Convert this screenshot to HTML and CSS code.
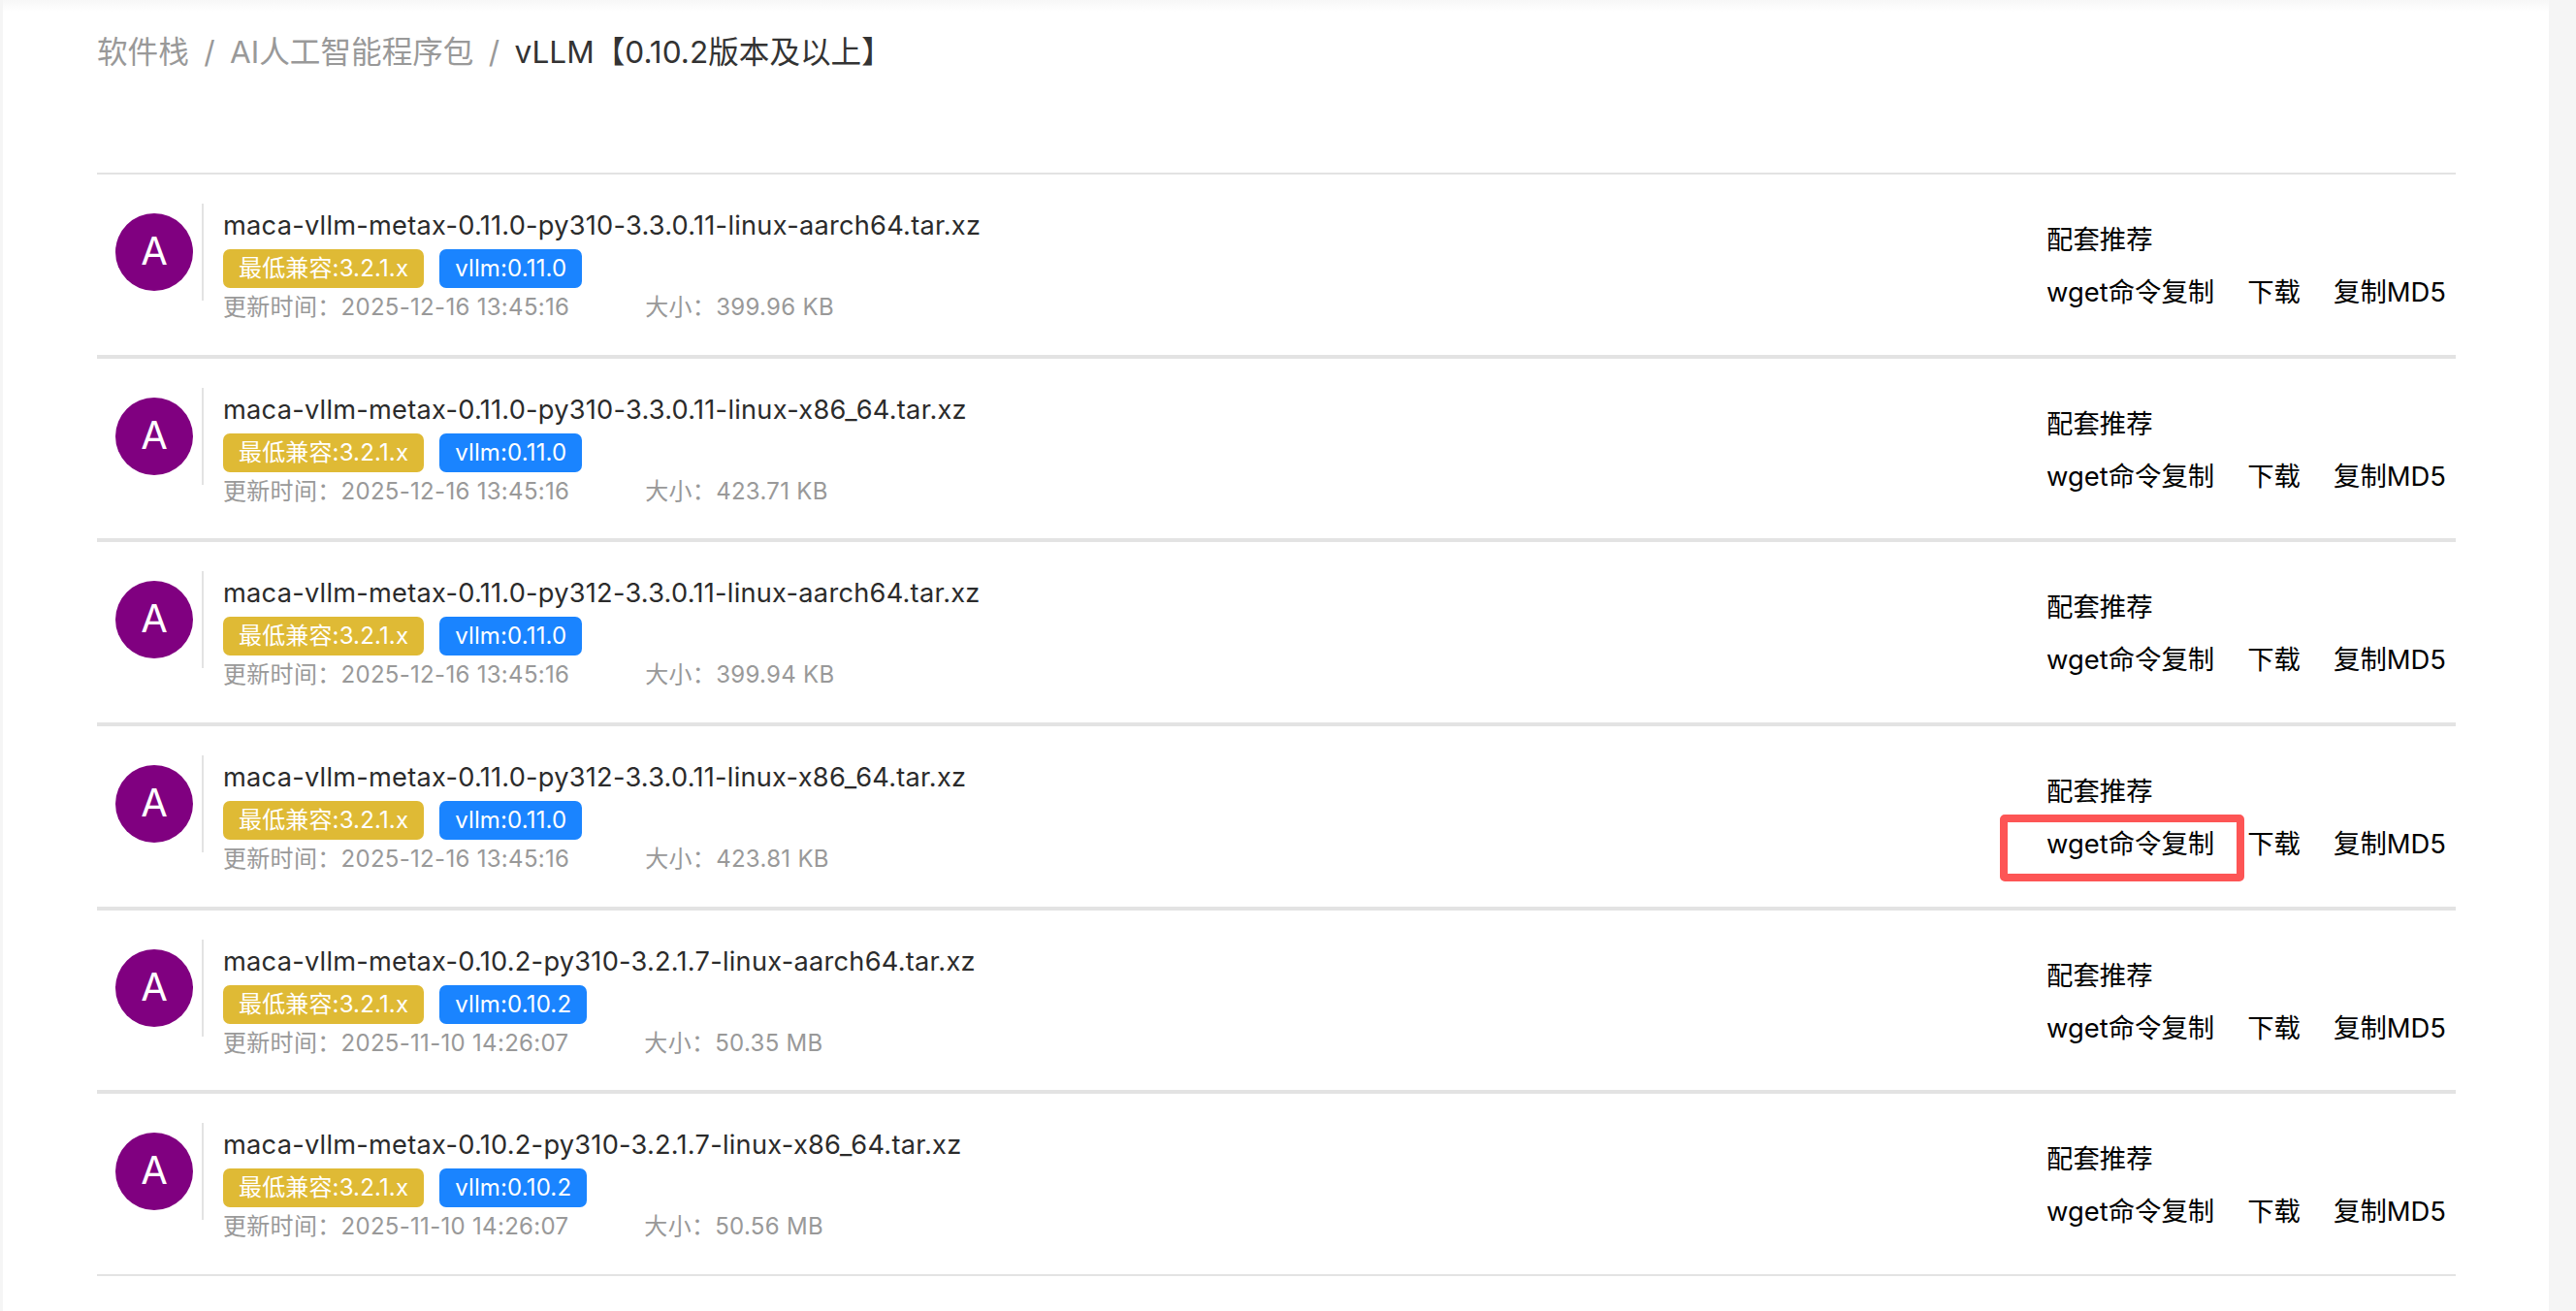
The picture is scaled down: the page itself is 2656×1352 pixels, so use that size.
FILE: index.html
```html
<!DOCTYPE html>
<html lang="zh-CN">
<head>
<meta charset="utf-8">
<title>vLLM 软件包</title>
<link rel="stylesheet" href="styles.css">
</head>
<body>
<main class="page">
  <nav class="crumbs">
    <span>软件栈</span><span class="sep">/</span><span>AI人工智能程序包</span><span class="sep">/</span><span class="current">vLLM【0.10.2版本及以上】</span>
  </nav>
  <ul class="list">
    <li class="row">
      <div class="avatar">A</div>
      <div class="info">
        <div class="name">maca-vllm-metax-0.11.0-py310-3.3.0.11-linux-aarch64.tar.xz</div>
        <div class="tags"><span class="tag gold">最低兼容:3.2.1.x</span><span class="tag blue">vllm:0.11.0</span></div>
        <div class="meta"><span>更新时间：2025-12-16 13:45:16</span><span class="size">大小：399.96 KB</span></div>
      </div>
      <div class="actions">
        <div class="act-line"><span>配套推荐</span></div>
        <div class="act-line"><span>wget命令复制</span><span>下载</span><span>复制MD5</span></div>
      </div>
    </li>
    <li class="row">
      <div class="avatar">A</div>
      <div class="info">
        <div class="name">maca-vllm-metax-0.11.0-py310-3.3.0.11-linux-x86_64.tar.xz</div>
        <div class="tags"><span class="tag gold">最低兼容:3.2.1.x</span><span class="tag blue">vllm:0.11.0</span></div>
        <div class="meta"><span>更新时间：2025-12-16 13:45:16</span><span class="size">大小：423.71 KB</span></div>
      </div>
      <div class="actions">
        <div class="act-line"><span>配套推荐</span></div>
        <div class="act-line"><span>wget命令复制</span><span>下载</span><span>复制MD5</span></div>
      </div>
    </li>
    <li class="row">
      <div class="avatar">A</div>
      <div class="info">
        <div class="name">maca-vllm-metax-0.11.0-py312-3.3.0.11-linux-aarch64.tar.xz</div>
        <div class="tags"><span class="tag gold">最低兼容:3.2.1.x</span><span class="tag blue">vllm:0.11.0</span></div>
        <div class="meta"><span>更新时间：2025-12-16 13:45:16</span><span class="size">大小：399.94 KB</span></div>
      </div>
      <div class="actions">
        <div class="act-line"><span>配套推荐</span></div>
        <div class="act-line"><span>wget命令复制</span><span>下载</span><span>复制MD5</span></div>
      </div>
    </li>
    <li class="row">
      <div class="avatar">A</div>
      <div class="info">
        <div class="name">maca-vllm-metax-0.11.0-py312-3.3.0.11-linux-x86_64.tar.xz</div>
        <div class="tags"><span class="tag gold">最低兼容:3.2.1.x</span><span class="tag blue">vllm:0.11.0</span></div>
        <div class="meta"><span>更新时间：2025-12-16 13:45:16</span><span class="size">大小：423.81 KB</span></div>
      </div>
      <div class="actions">
        <div class="act-line"><span>配套推荐</span></div>
        <div class="act-line"><span class="marked">wget命令复制</span><span>下载</span><span>复制MD5</span></div>
      </div>
    </li>
    <li class="row">
      <div class="avatar">A</div>
      <div class="info">
        <div class="name">maca-vllm-metax-0.10.2-py310-3.2.1.7-linux-aarch64.tar.xz</div>
        <div class="tags"><span class="tag gold">最低兼容:3.2.1.x</span><span class="tag blue">vllm:0.10.2</span></div>
        <div class="meta"><span>更新时间：2025-11-10 14:26:07</span><span class="size">大小：50.35 MB</span></div>
      </div>
      <div class="actions">
        <div class="act-line"><span>配套推荐</span></div>
        <div class="act-line"><span>wget命令复制</span><span>下载</span><span>复制MD5</span></div>
      </div>
    </li>
    <li class="row">
      <div class="avatar">A</div>
      <div class="info">
        <div class="name">maca-vllm-metax-0.10.2-py310-3.2.1.7-linux-x86_64.tar.xz</div>
        <div class="tags"><span class="tag gold">最低兼容:3.2.1.x</span><span class="tag blue">vllm:0.10.2</span></div>
        <div class="meta"><span>更新时间：2025-11-10 14:26:07</span><span class="size">大小：50.56 MB</span></div>
      </div>
      <div class="actions">
        <div class="act-line"><span>配套推荐</span></div>
        <div class="act-line"><span>wget命令复制</span><span>下载</span><span>复制MD5</span></div>
      </div>
    </li>
  </ul>
</main>
</body>
</html>
```
FILE: styles.css
```css
* { box-sizing: border-box; }
html, body { margin: 0; height: 100%; }
body {
  background: #f5f5f5;
  font-family: Inter, "Noto Sans CJK SC", sans-serif;
  overflow: hidden;
}
.page {
  margin: 0 28px 0 3px;
  height: 1352px;
  padding: 0 96px 0 97px;
  background: linear-gradient(#f7f7f7 0, #ffffff 12px);
}
.crumbs {
  display: flex;
  align-items: center;
  height: 178px;
  padding-bottom: 71px;
  font-size: 31.6px;
  line-height: 34px;
  color: #999;
}
.sep { margin: 0 15.4px; }
.current { color: #333; }
.list { list-style: none; margin: 0; padding: 0; }
.row {
  display: flex;
  align-items: flex-start;
  height: 189.67px;
  padding: 30px 0 0 19px;
  border-top: 2px solid #e3e3e3;
  border-bottom: 2px solid #e3e3e3;
}
.avatar {
  flex: none;
  width: 80px;
  height: 80px;
  margin: 10px 9px 0 0;
  border-radius: 50%;
  background: #800080;
  color: #fff;
  font-size: 40px;
  line-height: 78px;
  text-align: center;
}
.info {
  flex: 1;
  height: 100px;
  padding-left: 20px;
  border-left: 2px solid #e3e3e3;
}
.name {
  height: 47px;
  font-size: 27.2px;
  letter-spacing: 0.25px;
  line-height: 46px;
  color: #2b2b2b;
  white-space: nowrap;
}
.tags { display: flex; gap: 16px; }
.tag {
  height: 40px;
  padding: 0 16px;
  border-radius: 7px;
  color: #fff;
  font-size: 24px;
  letter-spacing: 0.15px;
  line-height: 40px;
}
.gold { background: #dfba35; }
.blue { background: #1a84ff; }
.meta {
  display: flex;
  font-size: 24px;
  letter-spacing: 0.3px;
  line-height: 39px;
  color: #999;
  white-space: nowrap;
}
.size { margin-left: 78px; }
.actions {
  flex: none;
  width: 422px;
  font-size: 27.4px;
  color: #000;
  padding-top: 15px;
}
.act-line { display: flex; gap: 34px; height: 54px; line-height: 44px; }
.marked { position: relative; }
.marked::after {
  content: "";
  position: absolute;
  left: -48px;
  right: -31px;
  top: -8px;
  height: 53px;
  border: 8px solid #fd5555;
  border-radius: 5px;
}
```
